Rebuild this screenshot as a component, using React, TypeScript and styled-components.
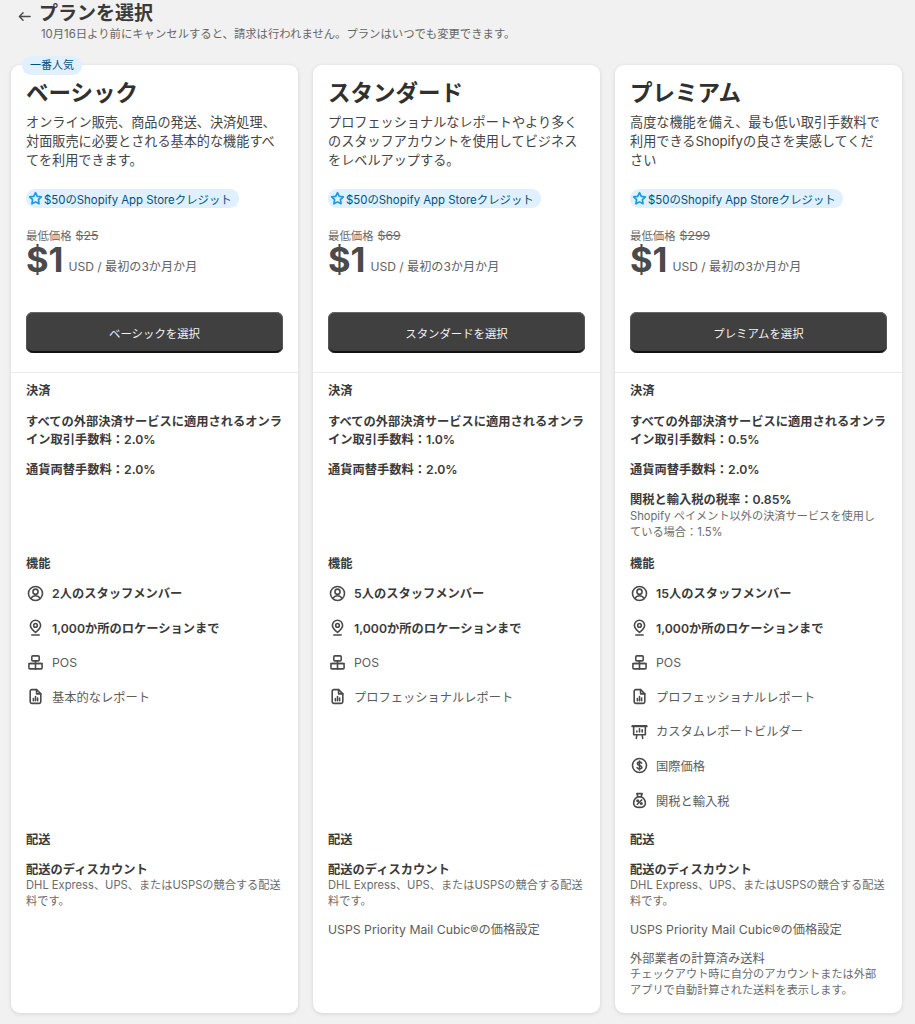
import React from "react";
import styled, { createGlobalStyle } from "styled-components";

const Global = createGlobalStyle`
  html, body { margin: 0; padding: 0; background: #f1f1f1; }
  body { font-family: Inter, "Noto Sans CJK JP", sans-serif; color: #303030; }
  * { box-sizing: border-box; }
`;

const Page = styled.div`
  width: 915px;
  height: 1024px;
  overflow: hidden;
  padding: 0 13px 0 11px;
`;
const Header = styled.header`
  display: flex;
  height: 65px;
  padding-top: 2px;
  padding-left: 6px;
  gap: 7px;
`;
const Back = styled.svg`
  width: 15px;
  height: 15px;
  margin-top: 7px;
  color: #4a4a4a;
`;
const HeadText = styled.div`
  display: flex;
  flex-direction: column;
`;
const Title = styled.h1`
  margin: 0;
  font-size: 19px;
  line-height: 24px;
  font-weight: 700;
  color: #3a3a3a;
`;
const Sub = styled.p`
  margin: 0 0 0 2px;
  font-size: 11.35px;
  line-height: 16px;
  color: #666;
`;
const Grid = styled.div`
  display: grid;
  grid-template-columns: repeat(3, 287px);
  gap: 15px;
`;
const Card = styled.section`
  position: relative;
  height: 948px;
  background: #fff;
  border-radius: 9px;
  box-shadow: 0 1px 4px rgba(0, 0, 0, 0.12);
`;
const Popular = styled.span`
  position: absolute;
  left: 11px;
  top: -9px;
  height: 19px;
  padding: 0 8px;
  border-radius: 9px;
  background: #e0f0ff;
  color: #00527c;
  font-size: 11px;
  line-height: 19px;
`;
const Top = styled.div`
  height: 308px;
  padding: 12px 15px 0;
  border-bottom: 1px solid #ebebeb;
  display: flex;
  flex-direction: column;
`;
const PlanName = styled.h2`
  margin: 0;
  font-size: 22.5px;
  line-height: 32px;
  font-weight: 700;
  color: #303030;
`;
const Desc = styled.p`
  margin: 4px 0 0;
  padding-right: 3px;
  height: 76px;
  font-size: 13.15px;
  line-height: 19px;
  color: #454545;
`;
const Credit = styled.div`
  display: inline-flex;
  align-self: flex-start;
  align-items: center;
  gap: 1px;
  height: 19px;
  padding: 0 7px 0 2px;
  border-radius: 9px;
  background: #e0f0ff;
  color: #00527c;
  font-size: 11.4px;
`;
const Star = styled.svg`
  width: 15px;
  height: 15px;
  color: #1a9be0;
`;
const Was = styled.div`
  margin-top: 20px;
  font-size: 11.4px;
  line-height: 15px;
  color: #6b6b6b;
`;
const Strike = styled.s`
  margin-left: 4px;
  font-size: 12.25px;
`;
const PriceRow = styled.div`
  display: flex;
  align-items: center;
  gap: 5px;
  height: 36px;
  margin-top: -2px;
`;
const Price = styled.span`
  font-size: 34.5px;
  line-height: 36px;
  font-weight: 700;
  color: #4a4a4a;
`;
const Per = styled.span`
  margin-top: 10px;
  font-size: 12.1px;
  color: #616161;
`;
const Select = styled.button`
  margin-top: 34px;
  height: 41px;
  width: 100%;
  border: 0;
  border-radius: 7px;
  background: #404040;
  box-shadow: inset 0 1px 0 #666, inset 1px 0 0 #555, inset -1px 0 0 #555, inset 0 -2px 0 #111;
  color: #f4f4f4;
  font: inherit;
  font-size: 11.4px;
`;
const Section = styled.div<{ $h: number }>`
  height: ${(p) => p.$h}px;
  padding: 8px 15px 0;
`;
const SectionTitle = styled.h3`
  margin: 0;
  font-size: 12.25px;
  line-height: 19px;
  font-weight: 700;
  color: #3a3a3a;
`;
const Fee = styled.div`
  margin-top: 12px;
  h3 + & {
    margin-top: 13px;
  }
`;
const FeeTitle = styled.div`
  font-size: 12.25px;
  line-height: 18px;
  font-weight: 600;
  color: #3a3a3a;
`;
const Note = styled.div`
  padding-right: 1.5px;
  font-size: 11.2px;
  line-height: 15.5px;
  color: #6b6b6b;
`;
const Features = styled.ul`
  list-style: none;
  margin: 10px 0 0;
  padding: 0;
  display: flex;
  flex-direction: column;
  gap: 14.6px;
`;
const Feature = styled.li`
  display: flex;
  align-items: center;
  gap: 8px;
  height: 20px;
  padding-left: 1px;
`;
const FeatIcon = styled.svg`
  flex: none;
  width: 17px;
  height: 17px;
  color: #4a4a4a;
`;
const FeatText = styled.span<{ $b?: boolean }>`
  font-size: 12.25px;
  font-weight: ${(p) => (p.$b ? 600 : 400)};
  color: ${(p) => (p.$b ? "#3a3a3a" : "#5c5c5c")};
`;
const Ship = styled.div`
  margin-top: 13px;
`;
const ShipFirst = styled.div`
  margin-top: 13px;
`;
const ShipTitle = styled.div<{ $b?: boolean }>`
  font-size: 12.25px;
  line-height: 16px;
  font-weight: ${(p) => (p.$b ? 600 : 400)};
  color: ${(p) => (p.$b ? "#3a3a3a" : "#5c5c5c")};
`;

type IconName = "user" | "pin" | "pos" | "report" | "builder" | "dollar" | "duty";
const paths: Record<IconName, React.ReactNode> = {
  user: (
    <>
      <circle cx="8" cy="8" r="6.6" />
      <circle cx="8" cy="6.3" r="2.4" />
      <path d="M3.800 12.600c1-1.700 2.400-2.500 4.200-2.500s3.200.8 4.200 2.500" />
    </>
  ),
  pin: (
    <>
      <path d="M8 12.600c-2.800-2.300-4.800-4.300-4.800-6.600a4.800 4.800 0 0 1 9.600 0c0 2.300-2 4.300-4.800 6.600z" />
      <circle cx="8" cy="6" r="1.700" />
      <path d="M4.500 15h7" />
    </>
  ),
  pos: (
    <>
      <rect x="4.500" y="1.800" width="7" height="4.700" rx="1" />
      <rect x="1.800" y="9" width="12.400" height="5" rx="1" />
      <path d="M8 6.500V9M8 9v5M1.800 9h12.400" />
    </>
  ),
  report: (
    <>
      <path d="M3 3a1.500 1.500 0 0 1 1.500-1.500h4.500L13 5.500V13a1.500 1.500 0 0 1-1.500 1.500h-7A1.500 1.500 0 0 1 3 13z" />
      <path d="M9 1.500v4h4" />
      <path d="M6 12V10M8 12V8M10 12V9.500" />
    </>
  ),
  builder: (
    <>
      <path d="M1.500 3h13" strokeWidth="2.200" />
      <path d="M2.500 3v8h11V3" />
      <path d="M5 14.500L5.500 11M11 14.500L10.500 11" />
      <path d="M5.500 8.500V7.500M8 8.500V5.500M10.500 8.500V6.500" />
    </>
  ),
  dollar: (
    <>
      <circle cx="8" cy="8" r="6.600" />
      <path d="M10 5.800C9.500 5 8.800 4.800 8 4.800c-1.200 0-2 .6-2 1.600 0 2.300 4.200 1 4.200 3.200 0 1-.9 1.600-2.200 1.600-1 0-1.800-.4-2.300-1.200M8 3.800v8.400" />
    </>
  ),
  duty: (
    <>
      <path d="M5.500 1.500h5L9.500 4.500h-3z" />
      <path d="M6.500 4.500C3.500 6 2.500 8.500 2.500 10.500c0 2.500 2 4 5.500 4s5.500-1.500 5.500-4c0-2-1-4.500-4-6z" />
      <path d="M6 11.500l4-4" />
      <circle cx="6.300" cy="8.200" r=".7" />
      <circle cx="9.700" cy="10.800" r=".7" />
    </>
  ),
};

const Icon = ({ name }: { name: IconName }) => (
  <FeatIcon viewBox="0 0 16 16" fill="none" stroke="currentColor" strokeWidth="1.500" strokeLinecap="round" strokeLinejoin="round">
    {paths[name]}
  </FeatIcon>
);

type Plan = {
  name: string;
  desc: string;
  was: string;
  btn: string;
  online: string;
  duty?: boolean;
  popular?: boolean;
  features: { icon: IconName; text: string; bold?: boolean }[];
  cubic?: boolean;
  third?: boolean;
};

const baseFeatures = (n: string, report: string) => [
  { icon: "user" as IconName, text: `${n}人のスタッフメンバー`, bold: true },
  { icon: "pin" as IconName, text: "1,000か所のロケーションまで", bold: true },
  { icon: "pos" as IconName, text: "POS" },
  { icon: "report" as IconName, text: report },
];

const plans: Plan[] = [
  {
    name: "ベーシック",
    desc: "オンライン販売、商品の発送、決済処理、対面販売に必要とされる基本的な機能すべてを利用できます。",
    was: "$25",
    btn: "ベーシックを選択",
    online: "2.0%",
    popular: true,
    features: baseFeatures("2", "基本的なレポート"),
  },
  {
    name: "スタンダード",
    desc: "プロフェッショナルなレポートやより多くのスタッフアカウントを使用してビジネスをレベルアップする。",
    was: "$69",
    btn: "スタンダードを選択",
    online: "1.0%",
    features: baseFeatures("5", "プロフェッショナルレポート"),
    cubic: true,
  },
  {
    name: "プレミアム",
    desc: "高度な機能を備え、最も低い取引手数料で利用できるShopifyの良さを実感してください",
    was: "$299",
    btn: "プレミアムを選択",
    online: "0.5%",
    duty: true,
    features: [
      ...baseFeatures("15", "プロフェッショナルレポート"),
      { icon: "builder", text: "カスタムレポートビルダー" },
      { icon: "dollar", text: "国際価格" },
      { icon: "duty", text: "関税と輸入税" },
    ],
    cubic: true,
    third: true,
  },
];

export default function App() {
  return (
    <Page>
      <Global />
      <Header>
        <Back viewBox="0 0 16 16" fill="none" stroke="currentColor" strokeWidth="1.500" strokeLinecap="round" strokeLinejoin="round">
          <path d="M14 8H2.500M6.500 4l-4 4 4 4" />
        </Back>
        <HeadText>
          <Title>プランを選択</Title>
          <Sub>10月16日より前にキャンセルすると、請求は行われません。プランはいつでも変更できます。</Sub>
        </HeadText>
      </Header>
      <Grid>
        {plans.map((p) => (
          <Card key={p.name}>
            {p.popular && <Popular>一番人気</Popular>}
            <Top>
              <PlanName>{p.name}</PlanName>
              <Desc>{p.desc}</Desc>
              <Credit>
                <Star viewBox="0 0 16 16" fill="none" stroke="currentColor" strokeWidth="1.800" strokeLinejoin="round">
                  <path d="M8 1.800l1.900 3.900 4.300.6-3.100 3 .7 4.300L8 11.600l-3.800 2 .7-4.300-3.100-3 4.300-.6z" />
                </Star>
                $50のShopify App Storeクレジット
              </Credit>
              <Was>
                最低価格<Strike>{p.was}</Strike>
              </Was>
              <PriceRow>
                <Price>$1</Price>
                <Per>USD / 最初の3か月か月</Per>
              </PriceRow>
              <Select>{p.btn}</Select>
            </Top>
            <Section $h={173}>
              <SectionTitle>決済</SectionTitle>
              <Fee>
                <FeeTitle>すべての外部決済サービスに適用されるオンライン取引手数料：{p.online}</FeeTitle>
              </Fee>
              <Fee>
                <FeeTitle>通貨両替手数料：2.0%</FeeTitle>
              </Fee>
              {p.duty && (
                <Fee>
                  <FeeTitle>関税と輸入税の税率：0.85%</FeeTitle>
                  <Note>Shopify ペイメント以外の決済サービスを使用している場合：1.5%</Note>
                </Fee>
              )}
            </Section>
            <Section $h={276}>
              <SectionTitle>機能</SectionTitle>
              <Features>
                {p.features.map((f) => (
                  <Feature key={f.text}>
                    <Icon name={f.icon} />
                    <FeatText $b={f.bold}>{f.text}</FeatText>
                  </Feature>
                ))}
              </Features>
            </Section>
            <Section $h={191}>
              <SectionTitle>配送</SectionTitle>
              <ShipFirst>
                <ShipTitle $b>配送のディスカウント</ShipTitle>
                <Note>DHL Express、UPS、またはUSPSの競合する配送料です。</Note>
              </ShipFirst>
              {p.cubic && (
                <Ship>
                  <ShipTitle>USPS Priority Mail Cubic®の価格設定</ShipTitle>
                </Ship>
              )}
              {p.third && (
                <Ship>
                  <ShipTitle>外部業者の計算済み送料</ShipTitle>
                  <Note>チェックアウト時に自分のアカウントまたは外部アプリで自動計算された送料を表示します。</Note>
                </Ship>
              )}
            </Section>
          </Card>
        ))}
      </Grid>
    </Page>
  );
}
